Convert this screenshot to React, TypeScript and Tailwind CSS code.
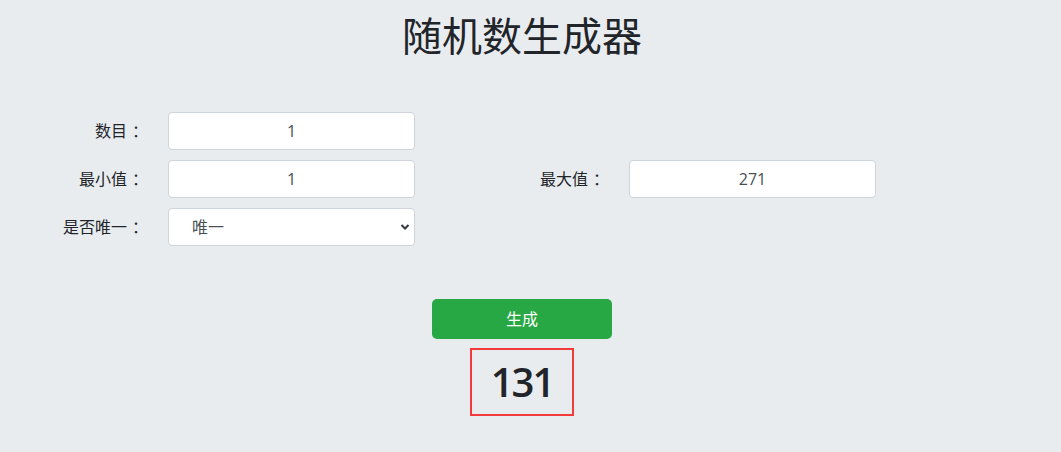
import React, { useState } from "react";

const font = { fontFamily: '"Open Sans", "Noto Sans CJK SC", sans-serif' };

function Field({ value, onChange }: { value: string; onChange: (v: string) => void }) {
  return (
    <input
      value={value}
      onChange={(e) => onChange(e.target.value)}
      className="w-[247px] h-[38px] bg-white border border-[#ced4da] rounded-[4px] text-center text-base text-[#495057] outline-none"
    />
  );
}

function Label({ text, width }: { text: string; width: string }) {
  return (
    <label className={`${width} text-right text-base`}>
      {text}
      <span className="inline-block w-[16px] pl-[5px] text-left">：</span>
    </label>
  );
}

export default function App() {
  const [count, setCount] = useState("1");
  const [min, setMin] = useState("1");
  const [max, setMax] = useState("271");
  const [unique, setUnique] = useState("唯一");
  const [result, setResult] = useState("131");

  const generate = () => {
    const lo = parseInt(min) || 0;
    const hi = parseInt(max) || 0;
    const n = Math.max(1, parseInt(count) || 1);
    const out: number[] = [];
    for (let i = 0; i < n; i++) out.push(lo + Math.floor(Math.random() * (hi - lo + 1)));
    setResult(out.join(", "));
  };

  return (
    <div className="min-h-[452px] bg-[#e9ecef] text-[#212529]" style={font}>
      <div className="w-[1044px] flex flex-col">
        <h1 className="pt-[12px] text-center text-[40px] leading-[48px] font-normal">随机数生成器</h1>

        <div className="mt-[52px] flex flex-col gap-[10px]">
          <div className="flex items-center">
            <Label text="数目" width="w-[143px]" />
            <div className="ml-[25px]">
              <Field value={count} onChange={setCount} />
            </div>
          </div>
          <div className="flex items-center">
            <Label text="最小值" width="w-[143px]" />
            <div className="ml-[25px]">
              <Field value={min} onChange={setMin} />
            </div>
            <Label text="最大值" width="w-[189px]" />
            <div className="ml-[25px]">
              <Field value={max} onChange={setMax} />
            </div>
          </div>
          <div className="flex items-center">
            <Label text="是否唯一" width="w-[143px]" />
            <div className="ml-[25px] relative w-[247px] h-[38px]">
              <select
                value={unique}
                onChange={(e) => setUnique(e.target.value)}
                className="appearance-none w-full h-full bg-white border border-[#ced4da] rounded-[4px] pl-[23px] text-base text-[#495057] outline-none"
                style={font}
              >
                <option>唯一</option>
                <option>不唯一</option>
              </select>
              <svg
                className="absolute right-[5px] top-[15px] pointer-events-none"
                width="10"
                height="8"
                viewBox="0 0 10 8"
              >
                <path d="M1.5 2 L5 5.5 L8.5 2" fill="none" stroke="#343a40" strokeWidth="2" />
              </svg>
            </div>
          </div>
        </div>

        <div className="mt-[53px] flex flex-col items-center">
          <button
            onClick={generate}
            className="w-[180px] h-[40px] bg-[#28a745] text-white text-base rounded-[5px]"
          >
            生成
          </button>
          <div
            className="mt-[9px] min-w-[104px] h-[68px] border-2 border-[#f33a3a] px-4 flex items-center justify-center text-[40px] leading-[48px] font-semibold tracking-[-2px]"
          >
            {result}
          </div>
        </div>
      </div>
    </div>
  );
}
